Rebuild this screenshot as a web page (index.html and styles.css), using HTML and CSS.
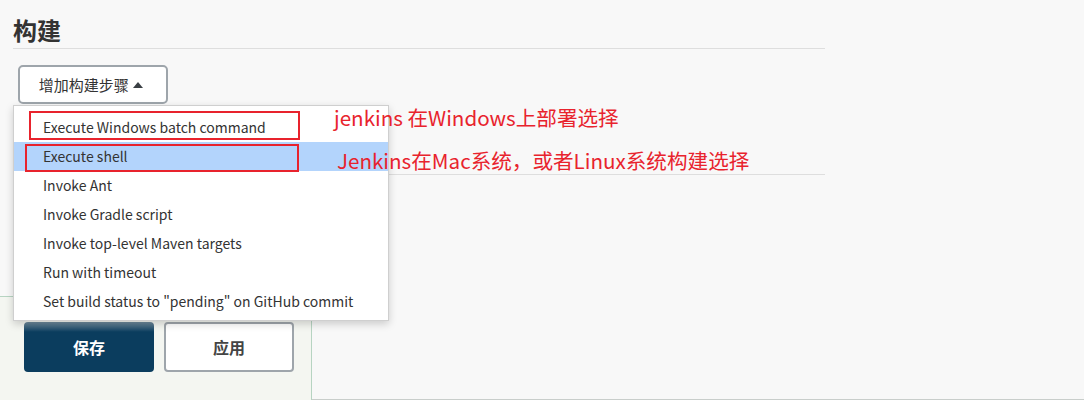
FILE: index.html
```html
<!DOCTYPE html>
<html lang="zh-CN">
<head>
  <meta charset="UTF-8">
  <meta name="viewport" content="width=device-width, initial-scale=1.0">
  <title>构建</title>
  <link rel="stylesheet" href="styles.css">
</head>
<body>
  <div class="page">
    <div class="section">
      <h2 class="section-title">构建</h2>
      <div class="step-bar">
        <button class="add-step">增加构建步骤 <span class="caret"></span></button>
      </div>
      <div class="section-end"></div>
    </div>

    <div class="bottom-bar">
      <button class="btn btn-save">保存</button>
      <button class="btn btn-apply">应用</button>
    </div>

    <ul class="menu">
      <li>Execute Windows batch command</li>
      <li class="active">Execute shell</li>
      <li>Invoke Ant</li>
      <li>Invoke Gradle script</li>
      <li>Invoke top-level Maven targets</li>
      <li>Run with timeout</li>
      <li>Set build status to "pending" on GitHub commit</li>
    </ul>

    <div class="mark mark-win"></div>
    <div class="mark mark-shell"></div>
    <p class="note note-win">jenkins 在Windows上部署选择</p>
    <p class="note note-shell">Jenkins在Mac系统，或者Linux系统构建选择</p>
  </div>
</body>
</html>
```

FILE: styles.css
```css
body {
  margin: 0;
  padding: 0;
  background-color: #ffffff;
  font-family: "Noto Sans CJK SC", "Noto Sans", sans-serif;
  color: #333;
}
.page {
  position: relative;
  height: 399px;
  background-color: #f8f8f8;
  border-bottom: 1px solid #c9cecb;
  display: flex;
  flex-direction: column;
  justify-content: space-between;
}
.section {
  width: 812px;
  margin-left: 13px;
}
.section-title {
  margin: 0;
  padding-top: 14px;
  height: 34px;
  font-size: 24px;
  line-height: 32px;
  font-weight: bold;
  color: #333;
  border-bottom: 1px solid #dedede;
}
.step-bar {
  padding: 16px 0 0 5px;
  height: 109px;
  border-bottom: 1px solid #dedede;
}
.add-step {
  width: 150px;
  height: 39px;
  background: #ffffff;
  border: 2px solid #9ea5ab;
  border-radius: 5px;
  font-family: inherit;
  font-size: 15px;
  color: #333;
  padding: 0 4px 0 0;
}
.caret {
  display: inline-block;
  width: 0;
  height: 0;
  margin-left: 1px;
  vertical-align: 3px;
  border-left: 5px solid transparent;
  border-right: 5px solid transparent;
  border-bottom: 6px solid #3a3f44;
}
.bottom-bar {
  position: relative;
  z-index: 1;
  width: 287px;
  height: 82px;
  margin-bottom: -6px;
  padding: 25px 0 0 24px;
  background-color: #f4f6f1;
  border: 1px solid #b7d4c2;
  border-left: none;
  display: flex;
  gap: 10px;
  box-shadow: inset 0 -6px 0 -5px #e4e8e2;
}
.btn {
  width: 130px;
  height: 50px;
  border-radius: 4px;
  font-family: inherit;
  font-size: 16px;
  font-weight: bold;
  cursor: pointer;
}
.btn-save {
  border: none;
  color: #ffffff;
  background: linear-gradient(#6f8a9c 0px, #0b3d5e 10px, #0b3d5e 100%);
}
.btn-apply {
  background: #ffffff;
  border: 2px solid #9ea5ab;
  color: #444;
}
.menu {
  position: absolute;
  z-index: 2;
  left: 13px;
  top: 105px;
  width: 374px;
  height: 207px;
  margin: 0;
  padding: 7px 0 0;
  list-style: none;
  background: #ffffff;
  border: 1px solid #cfcfcf;
  box-shadow: 0 3px 8px rgba(0, 0, 0, 0.18);
}
.menu li {
  height: 29px;
  line-height: 29px;
  padding-left: 29px;
  font-size: 14px;
  color: #333;
}
.menu li.active {
  background-color: #b3d4fc;
}
.mark {
  position: absolute;
  z-index: 3;
  border: 2px solid #e8232d;
}
.mark-win {
  left: 29px;
  top: 111px;
  width: 267px;
  height: 25px;
}
.mark-shell {
  left: 25px;
  top: 144px;
  width: 270px;
  height: 24px;
}
.note {
  position: absolute;
  z-index: 3;
  margin: 0;
  font-size: 20.6px;
  line-height: 26px;
  color: #e8232d;
  white-space: nowrap;
}
.note-win {
  left: 334px;
  top: 104px;
}
.note-shell {
  left: 337px;
  top: 147px;
}
```
